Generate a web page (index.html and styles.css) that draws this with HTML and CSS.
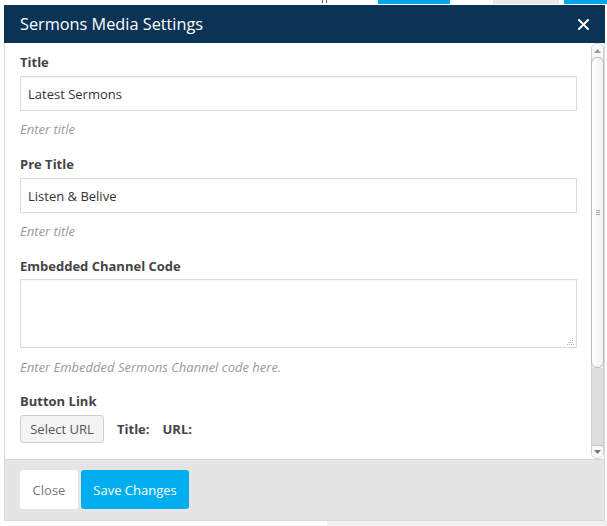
FILE: index.html
```html
<!DOCTYPE html>
<html>
<head>
<meta charset="utf-8">
<link rel="stylesheet" href="styles.css">
</head>
<body>
<div class="page">
  <div class="strip-top">
    <span class="gap-a"></span>
    <span class="blip"><i></i><i></i></span>
    <span class="gap-b"></span>
    <span class="bar blue b1"></span>
    <span class="gap-c"></span>
    <span class="bar grey b2"></span>
    <span class="gap-d"></span>
    <span class="bar blue b3"></span>
  </div>
  <div class="modal">
    <div class="modal-header">
      <h1 class="modal-title">Sermons Media Settings</h1>
      <svg class="close-x" width="11" height="11" viewBox="0 0 11 11"><path d="M1 1 L10 10 M10 1 L1 10" stroke="#fff" stroke-width="2" stroke-linecap="square"/></svg>
    </div>
    <div class="modal-body">
      <div class="content">
        <div class="field">
          <div class="label">Title</div>
          <div class="input">Latest Sermons</div>
          <div class="help">Enter title</div>
        </div>
        <div class="field">
          <div class="label">Pre Title</div>
          <div class="input">Listen &amp; Belive</div>
          <div class="help">Enter title</div>
        </div>
        <div class="field field-code">
          <div class="label">Embedded Channel Code</div>
          <div class="textarea">
            <svg class="grip" width="7" height="7" viewBox="0 0 7 7" fill="#bbb"><rect x="5" y="0" width="1" height="1"/><rect x="3" y="2" width="1" height="1"/><rect x="5" y="2" width="1" height="1"/><rect x="1" y="4" width="1" height="1"/><rect x="3" y="4" width="1" height="1"/><rect x="5" y="4" width="1" height="1"/><rect x="0" y="6" width="1" height="1"/><rect x="2" y="6" width="1" height="1"/><rect x="4" y="6" width="1" height="1"/><rect x="6" y="6" width="1" height="1"/></svg>
          </div>
          <div class="help">Enter Embedded Sermons Channel code here.</div>
        </div>
        <div class="field">
          <div class="label">Button Link</div>
          <div class="link-row">
            <span class="btn-select">Select URL</span>
            <span class="link-key">Title:</span>
            <span class="link-key">URL:</span>
          </div>
        </div>
      </div>
      <div class="scrollbar">
        <div class="sb-btn sb-up"><svg width="7" height="4" viewBox="0 0 7 4"><path d="M0 4 L3.5 0 L7 4Z" fill="#999"/></svg></div>
        <div class="sb-thumb"><span class="grip-lines"></span></div>
        <div class="sb-track"></div>
        <div class="sb-btn sb-down"><svg width="7" height="4" viewBox="0 0 7 4"><path d="M0 0 L3.5 4 L7 0Z" fill="#777"/></svg></div>
      </div>
    </div>
    <div class="modal-footer">
      <span class="btn btn-close">Close</span>
      <span class="btn btn-save">Save Changes</span>
    </div>
  </div>
  <div class="strip-bottom">
    <span class="sb-white"></span>
    <span class="sb-grey"></span>
  </div>
</div>
</body>
</html>
```

FILE: styles.css
```css
* { box-sizing: border-box; }
html, body { margin: 0; padding: 0; background: #fff; }
body { font-family: "Open Sans", "Noto Sans", sans-serif; font-size: 13px; color: #444; }

.page { width: 607px; height: 526px; overflow: hidden; }

.strip-top { display: flex; height: 5px; align-items: flex-start; }
.gap-a { width: 322px; }
.blip { display: flex; gap: 3px; width: 8px; height: 3px; }
.blip i { display: block; width: 1px; height: 3px; background: #666; }
.gap-b { width: 48px; }
.bar { height: 4px; display: block; }
.blue { background: #00a6e8; }
.grey { background: #e8e8e8; }
.b1 { width: 72px; }
.gap-c { width: 43px; }
.b2 { width: 66px; }
.gap-d { width: 5px; }
.b3 { flex: 1; }

.modal {
  margin-left: 4px;
  width: 601px;
  height: 516px;
  border: 1px solid #d9d9d9;
  border-top: none;
  display: flex;
  flex-direction: column;
  background: #fff;
}

.modal-header {
  height: 38px;
  background: #0a3356;
  margin: 0 -1px;
  padding: 0 16px 0 16px;
  display: flex;
  align-items: center;
  justify-content: space-between;
  flex: none;
}
.modal-title {
  margin: 0;
  font-size: 16.3px;
  font-weight: 400;
  color: #fff;
  line-height: 24px;
}
.close-x { margin-top: 1px; }

.modal-body {
  height: 416px;
  display: flex;
  flex: none;
  overflow: hidden;
}
.content {
  flex: 1;
  padding: 10px 14px 0 15px;
}
.field { margin-bottom: 17px; }
.field-code { margin-bottom: 16px; }
.field-code .label { margin-bottom: 4px; }
.field-code .help { margin-top: 10px; }
.label {
  font-weight: 700;
  line-height: 18px;
  color: #444;
  margin-bottom: 5px;
}
.input {
  height: 35px;
  border: 1px solid #dcdcdc;
  padding: 1px 7px 0;
  line-height: 32px;
  color: #333;
  box-shadow: inset 0 1px 2px rgba(0,0,0,0.04);
}
.textarea {
  position: relative;
  height: 69px;
  border: 1px solid #dcdcdc;
  box-shadow: inset 0 1px 2px rgba(0,0,0,0.04);
}
.grip { position: absolute; right: 2px; bottom: 2px; }
.help {
  margin-top: 9px;
  font-style: italic;
  color: #9a9a9a;
  line-height: 18px;
}
.link-row { display: flex; align-items: center; }
.btn-select {
  height: 28px;
  width: 84px;
  display: flex;
  align-items: center;
  justify-content: center;
  border: 1px solid #cfcfcf;
  border-radius: 3px;
  background: #f4f4f4;
  color: #555;
  margin-right: 13px;
}
.link-key { font-weight: 700; color: #444; margin-right: 13px; }

.scrollbar {
  width: 13px;
  display: flex;
  flex-direction: column;
  background: #f2f2f2;
  border: 1px solid #cfcfcf;
  border-radius: 6px;
  flex: none;
}
.sb-btn { height: 13px; display: flex; align-items: center; justify-content: center; flex: none; }
.sb-up { border-radius: 6px 6px 0 0; background: #f7f7f7; }
.sb-down { border-radius: 0 0 6px 6px; background: #f7f7f7; border-top: 1px solid #c8c8c8; }
.sb-thumb {
  height: 311px;
  flex: none;
  border: 1px solid #b9b9b9;
  border-radius: 6px;
  margin: 0 -1px;
  background: linear-gradient(to right, #fdfdfd, #f1f1f1);
  display: flex;
  align-items: center;
  justify-content: center;
}
.grip-lines {
  width: 4px;
  height: 5px;
  border-top: 1px solid #aaa;
  border-bottom: 1px solid #aaa;
  position: relative;
}
.grip-lines::after {
  content: "";
  position: absolute;
  left: 0; right: 0; top: 1px;
  border-top: 1px solid #aaa;
}
.sb-track { flex: 1; background: #dedede; }

.modal-footer {
  flex: 1;
  background: #e5e5e5;
  border-top: 1px solid #d6d6d6;
  padding: 10px 15px;
  display: flex;
  gap: 3px;
  align-items: flex-start;
}
.btn {
  height: 39px;
  display: flex;
  align-items: center;
  justify-content: center;
  border-radius: 3px;
  font-size: 13px;
}
.btn-close { width: 58px; background: #fff; color: #777; }
.btn-save { width: 108px; background: #00aeef; color: #fff; }

.strip-bottom { display: flex; height: 5px; }
.sb-white { width: 327px; background: #fff; }
.sb-grey { flex: 1; background: #f1f1f1; }
```
